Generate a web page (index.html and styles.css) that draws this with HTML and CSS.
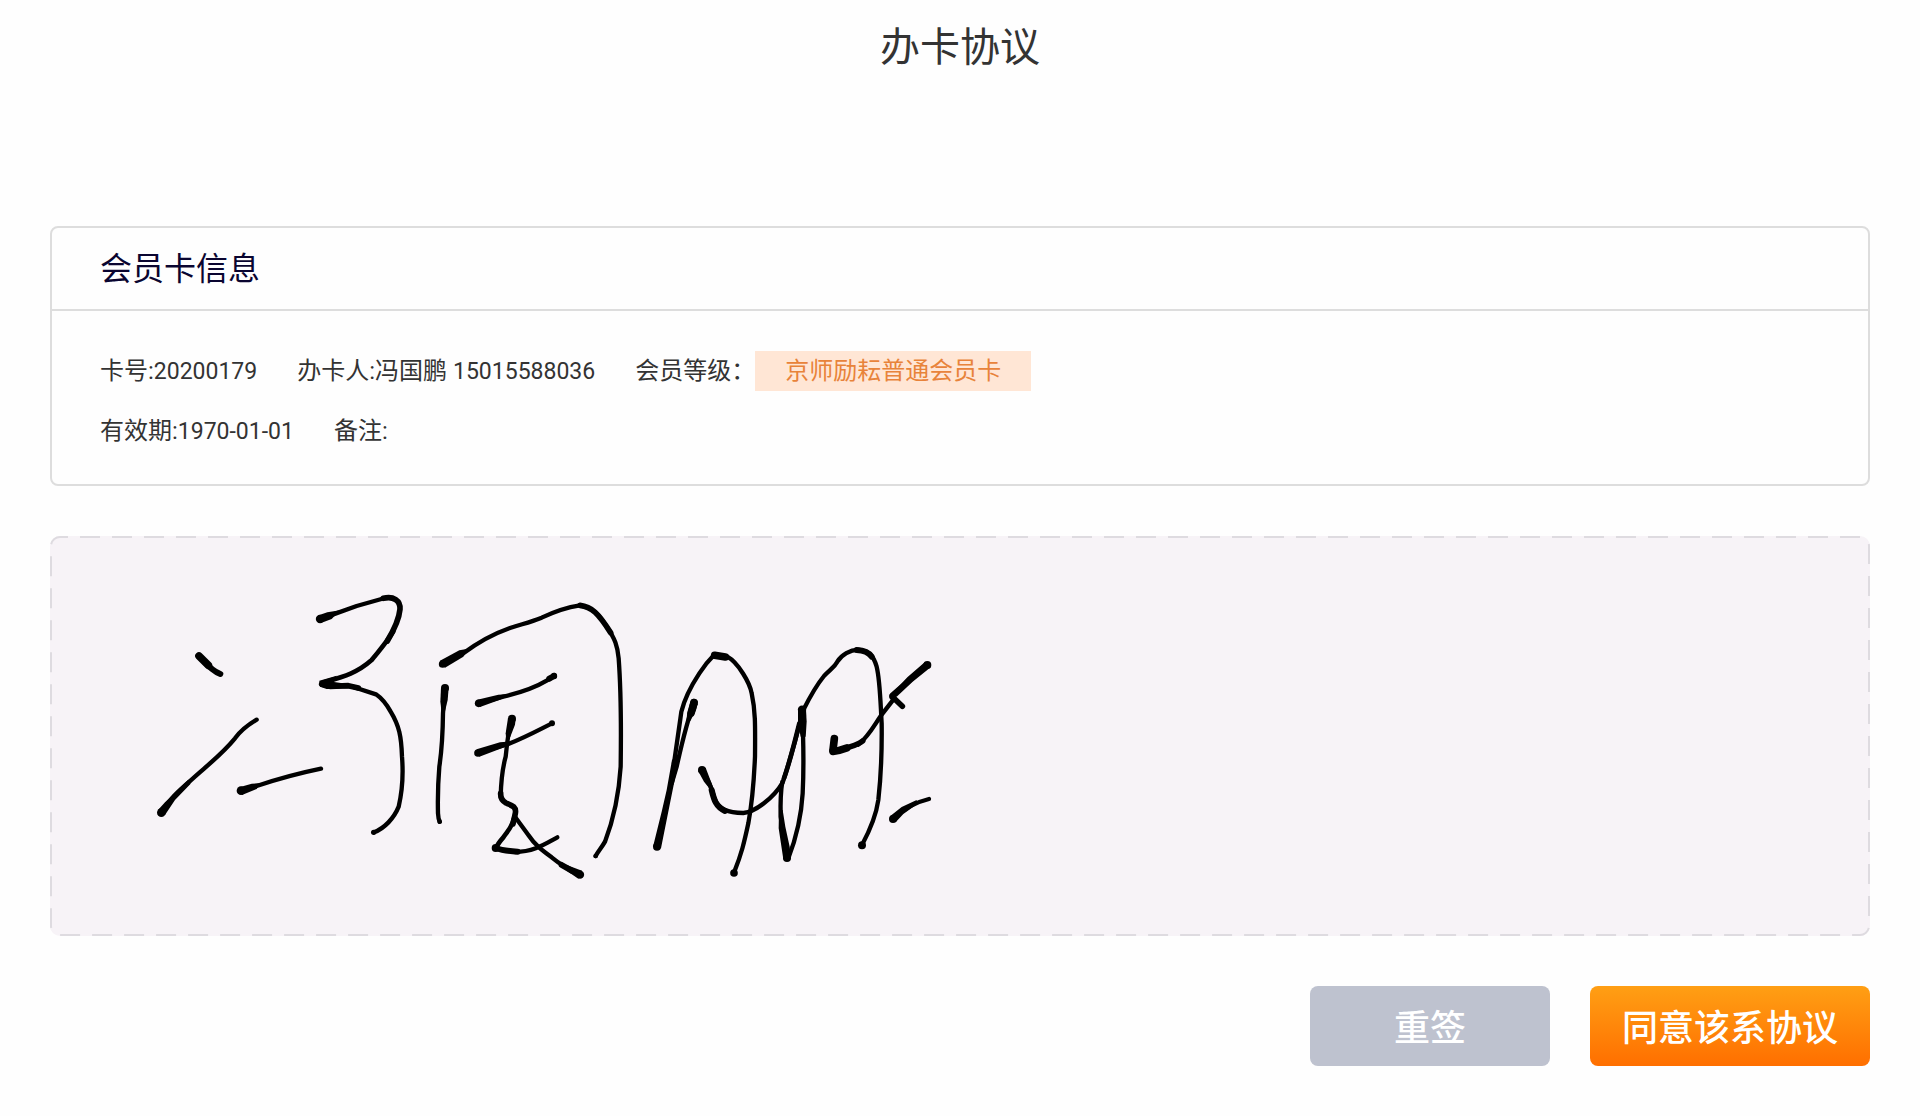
FILE: index.html
```html
<!DOCTYPE html>
<html lang="zh-CN">
<head>
<meta charset="utf-8">
<meta name="viewport" content="width=device-width, initial-scale=1">
<title>办卡协议</title>
<link rel="stylesheet" href="styles.css">
</head>
<body>
<header class="page-header">
  <h1 class="page-title">办卡协议</h1>
</header>
<main class="page-main">
  <section class="card">
    <h2 class="card-title">会员卡信息</h2>
    <div class="card-body">
      <div class="info-row">
        <span>卡号:<span class="num">20200179</span></span>
        <span>办卡人:冯国鹏 <span class="num">15015588036</span></span>
        <span class="level">会员等级：<span class="tag">京师励耘普通会员卡</span></span>
      </div>
      <div class="info-row">
        <span>有效期:<span class="num">1970-01-01</span></span>
        <span>备注:</span>
      </div>
    </div>
  </section>

  <section class="pad" aria-label="签名">
    <svg class="pad-frame" aria-hidden="true"><rect class="pad-outline" x="1" y="1" rx="9" ry="9"/></svg>
    <svg class="signature" viewBox="0 0 920 400" role="img" aria-label="冯国鹏">
      <g transform="translate(90 34) scale(.33333)">
        <path class="w20" d="M177 258L205 286"/>
        <path class="w16" d="M190 271Q216 302 241 312"/>
        <path class="w12" d="M350 449C320 467 303 480 285 505C240 560 190 595 148 635C110 668 95 682 64 728"/>
        <path class="fill" d="M54 720L75 697L144 630L152 641L105 690L75 735Z"/>
        <circle cx="64" cy="728" r="13"/>
        <path class="w12" d="M303 663L350 648C410 628 470 611 543 596"/>
        <path class="fill" d="M298 652L335 641L362 640L350 657L306 675Z"/>
        <circle cx="303" cy="662" r="13"/>
        <path class="w12" d="M540 147L580 133L650 108L735 84"/>
        <path class="fill" d="M536 136L562 127L600 121L575 147L543 159Z"/>
        <circle cx="540" cy="147" r="12.500"/>
        <path class="w15" d="M730 85C760 77 782 92 780 118C777 150 762 180 742 213"/>
        <path class="w13" d="M760 184C735 225 710 250 695 270C650 310 610 320 548 338"/>
        <path class="w15" d="M545 342L570 349L625 347L655 354"/>
        <path class="fill" d="M538 332L590 317L582 336L650 346L630 355L560 357L540 350Z"/>
        <path class="w12" d="M640 351L708 373C730 388 742 407 752 425C778 468 784 500 786 560C790 610 790 650 776 710C762 745 733 775 702 787"/>
        <circle cx="701" cy="787" r="8"/>
      </g>
      <g transform="translate(370 44) scale(.33333)">
        <path class="w12" d="M68 252L130 220C170 190 210 165 270 144C310 131 330 127 365 113C400 96 440 82 480 76C520 82 540 108 560 140C585 175 593 200 596 235C603 330 604 420 602 560C597 640 580 720 555 785C545 803 535 813 527 828"/>
        <path class="w15" d="M480 76C515 80 535 100 572 158"/>
        <path class="fill" d="M60 242L118 211L145 206L130 230L75 263Z"/>
        <circle cx="68" cy="252" r="11.500"/>
        <circle cx="527" cy="828" r="7"/>
        <path class="w12" d="M74 325L69 400C68 490 64 520 58 560C53 620 53 660 54 700Q55 717 59 725"/>
        <path class="fill" d="M63 323L61 365L65 398L74 398L83 360L86 323Z"/>
        <circle cx="75" cy="324" r="12"/>
        <circle cx="59" cy="725" r="7"/>
        <path class="w12" d="M176 370L250 350C310 336 350 320 380 302L402 288"/>
        <path class="fill" d="M172 359L235 344L275 342L240 359L180 381Z"/>
        <path class="w16" d="M388 296L402 288"/>
        <circle cx="176" cy="370" r="11.500"/>
        <circle cx="402" cy="288" r="9.500"/>
        <path class="w12" d="M174 519L265 492C320 470 350 453 396 430"/>
        <path class="fill" d="M170 508L240 487L275 484L255 501L178 530Z"/>
        <circle cx="174" cy="519" r="11.500"/>
        <circle cx="396" cy="430" r="9"/>
        <path class="w12" d="M275 416C265 450 262 480 257 530C246 570 243 610 242 650"/>
        <path class="fill" d="M264 414L257 460L259 480L271 470L285 434L287 416Z"/>
        <circle cx="276" cy="416" r="12"/>
        <path class="w15" d="M242 640Q241 660 258 669C275 676 290 680 286 700L279 732"/>
        <path class="w13" d="M282 715C276 742 264 752 250 772Q234 790 228 804"/>
        <path class="w16" d="M228 804Q250 813 293 815"/>
        <circle cx="227" cy="804" r="12"/>
        <path class="w12" d="M285 816C340 815 370 795 412 772"/>
        <path class="w12" d="M286 712L325 765C345 795 365 810 395 832C425 857 445 868 480 884"/>
        <path class="w16" d="M425 855L455 872"/>
        <path class="fill" d="M440 855L486 872L475 896L442 874Z"/>
        <circle cx="480" cy="884" r="12.500"/>
      </g>
      <g transform="translate(590 94) scale(.33333)">
        <path class="w12" d="M162 218C148 255 132 310 110 410L95 460"/>
        <path class="w20" d="M162 218L153 250"/>
        <path class="fill" d="M151 216L141 255L138 285L151 273L168 240L173 222Z"/>
        <path class="fill" d="M96 390L120 370L106 440L90 520L63 655L39 650L65 545L80 480Z"/>
        <circle cx="51" cy="650" r="12"/>
        <circle cx="162" cy="218" r="11.500"/>
        <path class="w12" d="M102 400C112 330 118 290 124 245C135 200 155 165 178 130C195 104 207 90 222 75L262 80C295 98 330 160 335 190C346 240 346 280 345 380C342 450 338 510 325 580C312 640 305 670 282 728"/>
        <path class="w20" d="M224 76L256 81"/>
        <circle cx="282" cy="729" r="11.500"/>
        <path class="w12" d="M186 420C205 450 215 470 223 505C235 538 265 548 310 549C345 546 400 505 428 458C450 390 467 330 482 270"/>
        <path class="w16" d="M215 480C222 510 228 530 255 543"/>
        <path class="fill" d="M174 422L192 455L212 480L219 470L209 445L197 413Z"/>
        <circle cx="186" cy="420" r="12"/>
        <path class="w13" d="M432 445C448 400 462 345 478 280"/>
        <path class="w12" d="M427 455C421 490 421 520 422 560L440 682"/>
        <path class="fill" d="M417 540L428 540L436 590L449 650L452 684L430 688L416 595Z"/>
        <path class="w12" d="M445 685C470 620 484 560 488 490C491 430 491 380 489 310L486 238"/>
        <circle cx="441" cy="684" r="12"/>
        <path class="fill" d="M474 238L474 280L482 320L497 320L500 275L498 238Z"/>
        <circle cx="486" cy="239" r="12.500"/>
        <path class="w12" d="M490 240C510 200 530 165 552 138C575 115 583 112 592 95C605 74 630 60 655 59C685 62 700 75 710 110C720 150 721 210 725 280C726 360 724 430 715 510C708 560 690 600 666 645"/>
        <path class="w16" d="M650 60C670 61 685 65 695 80"/>
        <circle cx="666" cy="646" r="12"/>
        <path class="w20" d="M583 326L579 360"/>
        <path class="w20" d="M579 364Q600 362 620 354"/>
        <path class="w15" d="M600 359Q655 345 668 333"/>
        <path class="w12" d="M655 344C690 315 705 280 728 250L763 205"/>
        <path class="w15" d="M757 196L860 105"/>
        <path class="fill" d="M802 142L854 97L872 112L818 155L770 200L752 196Z"/>
        <circle cx="862" cy="105" r="12"/>
        <path class="w15" d="M757 200L787 229"/>
        <circle cx="758" cy="200" r="10"/>
        <path class="w12" d="M759 567C790 537 820 518 867 507"/>
        <path class="fill" d="M750 559L785 531L830 510L832 522L790 552L767 577Z"/>
        <circle cx="759" cy="567" r="12"/>
      </g>
    </svg>
  </section>

  <div class="actions">
    <button class="btn btn-reset" type="button">重签</button>
    <button class="btn btn-agree" type="button">同意该系协议</button>
  </div>
</main>
</body>
</html>
```
FILE: styles.css
```css
* {
  box-sizing: border-box;
}

body {
  margin: 0;
  background: #fefefe;
  color: #333;
  font-family: Roboto, "Noto Sans CJK SC", sans-serif;
  font-size: 24px;
  line-height: 40px;
}

.page-header {
  padding: 18px 50px 148px;
}

.page-title {
  margin: 0;
  font-size: 40px;
  font-weight: 400;
  line-height: 60px;
  text-align: center;
}

.page-main {
  display: flex;
  flex-direction: column;
  gap: 50px;
  padding: 0 50px 50px;
}

.card {
  border: 2px solid #ddd;
  border-radius: 8px;
}

.card-title {
  margin: 0;
  padding: 17px 48px 16px;
  border-bottom: 2px solid #ddd;
  color: #0a0530;
  font-size: 32px;
  font-weight: 400;
  line-height: 48px;
}

.card-body {
  display: flex;
  flex-direction: column;
  gap: 20px;
  padding: 40px 48px 33px;
}

.info-row {
  display: flex;
  flex-wrap: wrap;
  gap: 0 40px;
}

.num {
  font-size: 23px;
  line-height: 1;
}

.level {
  display: flex;
}

.tag {
  padding: 0 30px;
  background: #ffe6d5;
  color: #e8833a;
}

.pad {
  position: relative;
  border-radius: 10px;
  background: #f7f3f7;
}

.pad-frame {
  position: absolute;
  inset: 0;
  width: 100%;
  height: 100%;
}

.pad-outline {
  width: calc(100% - 2px);
  height: calc(100% - 2px);
  fill: none;
  stroke: #dedbe0;
  stroke-width: 2;
  stroke-dasharray: 20 12;
  stroke-dashoffset: 12;
}

.signature {
  display: block;
  width: 920px;
  max-width: 100%;
  height: 400px;
}

.signature path {
  fill: none;
  stroke: #000;
  stroke-linecap: round;
  stroke-linejoin: round;
}

.signature .fill {
  fill: #000;
  stroke: none;
}

.signature .w12 { stroke-width: 13; }
.signature .w13 { stroke-width: 14; }
.signature .w15 { stroke-width: 17; }
.signature .w16 { stroke-width: 18; }
.signature .w20 { stroke-width: 23; }

.actions {
  display: flex;
  justify-content: flex-end;
  gap: 40px;
}

.btn {
  height: 80px;
  padding: 0 32px 2px;
  border: 0;
  border-radius: 8px;
  color: #fff;
  font-family: inherit;
  font-size: 36px;
  font-weight: 500;
  cursor: pointer;
}

.btn-reset {
  min-width: 240px;
  background: #bec2cf;
}

.btn-agree {
  min-width: 280px;
  background: linear-gradient(#ff9f14, #ff6f00);
}
```
